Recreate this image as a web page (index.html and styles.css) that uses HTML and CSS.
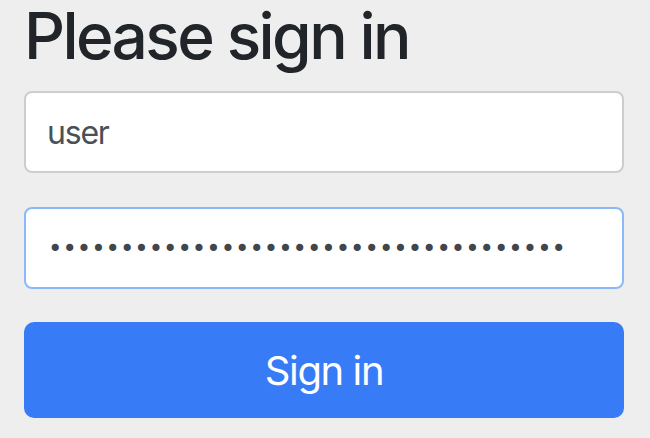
FILE: index.html
```html
<!DOCTYPE html>
<html lang="en">
<head>
<meta charset="utf-8">
<title>Please sign in</title>
<link rel="stylesheet" href="styles.css">
</head>
<body>
<form class="signin">
  <h2 class="signin-heading">Please sign in</h2>
  <input class="field field-text" type="text" name="username" value="user" aria-label="Username">
  <input class="field field-focused" type="password" name="password" value="aaaaaaaaaaaaaaaaaaaaaaaaaaaaaaaaaaaa" aria-label="Password">
  <button class="btn-primary" type="button">Sign in</button>
</form>
</body>
</html>
```
FILE: styles.css
```css
html, body {
  margin: 0;
  padding: 0;
  background: #eeeeee;
}
body {
  font-family: Inter, "Noto Sans", "Liberation Sans", sans-serif;
  overflow: hidden;
}
.signin {
  width: 600px;
  margin-left: 24px;
  padding-top: 2px;
  display: flex;
  flex-direction: column;
}
.signin-heading {
  margin: 0 0 21px 0;
  font-size: 64px;
  line-height: 68px;
  font-weight: 500;
  color: #212529;
  letter-spacing: -2.6px;
}
.field {
  box-sizing: border-box;
  height: 82px;
  width: 100%;
  margin: 0 0 34px 0;
  padding: 0 22px;
  border: 2px solid #cdcdcd;
  border-radius: 8px;
  background: #ffffff;
  font-family: inherit;
  font-size: 32px;
  color: #495057;
  outline: none;
}
.field-text {
  padding-left: 21px;
  letter-spacing: -1.2px;
}
.field-focused {
  border-color: #8ab8f9;
  margin-bottom: 33px;
  padding-left: 22px;
  font-family: "DejaVu Sans", sans-serif;
  font-size: 24.4px;
  color: #40464c;
}
.btn-primary {
  box-sizing: border-box;
  height: 96px;
  width: 100%;
  border: none;
  border-radius: 10px;
  background: #377bf6;
  color: #ffffff;
  font-family: inherit;
  font-size: 40px;
  font-weight: 400;
  letter-spacing: -1.4px;
  cursor: pointer;
}
```
